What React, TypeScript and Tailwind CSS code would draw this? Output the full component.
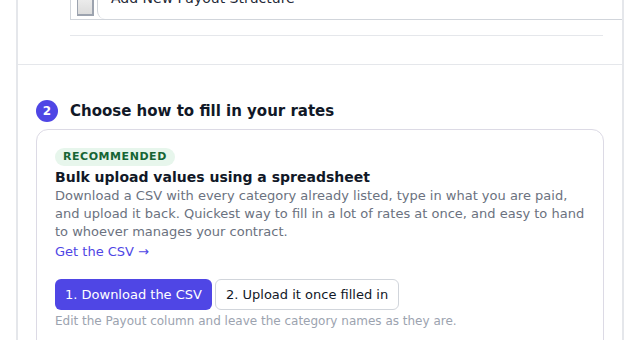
import React from "react";

const StepBadge: React.FC<{ n: number }> = ({ n }) => (
  <span className="flex h-[22px] w-[22px] shrink-0 items-center justify-center rounded-full bg-[#4f46e5] text-[12px] font-bold text-white">
    {n}
  </span>
);

export default function App() {
  return (
    <div className="h-[340px] w-[640px] overflow-hidden bg-white pt-[1px] font-['DejaVu_Sans',sans-serif] text-[#111827]">
      <div className="mx-4 border-x-2 border-[#e5e7eb]">
        {/* Step 1 (scrolled out of view) */}
        <div className="border-b border-[#e5e7eb] pb-[28px] pl-[52px] pr-[19px]">
          <div className="-mr-[19px] -mt-[10px] flex h-[29px] items-end border-b border-l border-[#d1d5db]">
            <div className="mb-[3px] ml-[6px] h-[24px] w-[17px] border border-b-2 border-r-2 border-[#9ca3af] bg-gradient-to-b from-[#f3f3f3] to-[#dcdcdc]" />
            <div className="ml-[3px] h-full flex-1 rounded-bl-[8px] border-l border-[#d1d5db] pl-[13px] text-[14px] leading-[14px] text-[#1f2937]">
              Add New Payout Structure
            </div>
          </div>
          <hr className="mt-[15px] border-t border-[#e5e7eb]" />
        </div>

        {/* Step 2 */}
        <div className="px-[18px] pt-[35px]">
          <div className="flex items-center gap-3">
            <StepBadge n={2} />
            <h2 className="text-[15px] font-bold leading-[22px] text-[#111827]">
              Choose how to fill in your rates
            </h2>
          </div>

          <div className="mt-[7px] rounded-xl border border-[#dcdae5] p-[18px] pb-6">
            <div className="mb-[2px] w-fit rounded-full bg-[#e7f6ec] px-2 text-[11px] font-bold leading-[18px] tracking-[0.05em] text-[#166534]">
              RECOMMENDED
            </div>
            <h3 className="text-[14px] font-bold leading-[19px] text-[#111827]">
              Bulk upload values using a spreadsheet
            </h3>
            <p className="text-[13px] leading-[18px] text-[#6b7280]">
              Download a CSV with every category already listed, type in what you are paid, and upload it back. Quickest way to fill in a lot of rates at once, and easy to hand to whoever manages your contract.
            </p>
            <a href="#" className="mt-[2px] block w-fit text-[13px] leading-[18px] text-[#4f46e5]">
              Get the CSV →
            </a>

            <div className="mt-[18px] flex gap-[3px]">
              <button className="h-[31px] rounded-md bg-[#4f46e5] px-[10px] text-[13px] text-white">
                1. Download the CSV
              </button>
              <button className="h-[31px] rounded-md border border-[#d1d5db] bg-white px-[10px] text-[13px] text-[#111827]">
                2. Upload it once filled in
              </button>
            </div>
            <p className="mt-[3px] text-[12px] leading-4 text-[#9ca3af]">
              Edit the Payout column and leave the category names as they are.
            </p>
          </div>
        </div>
      </div>
    </div>
  );
}
